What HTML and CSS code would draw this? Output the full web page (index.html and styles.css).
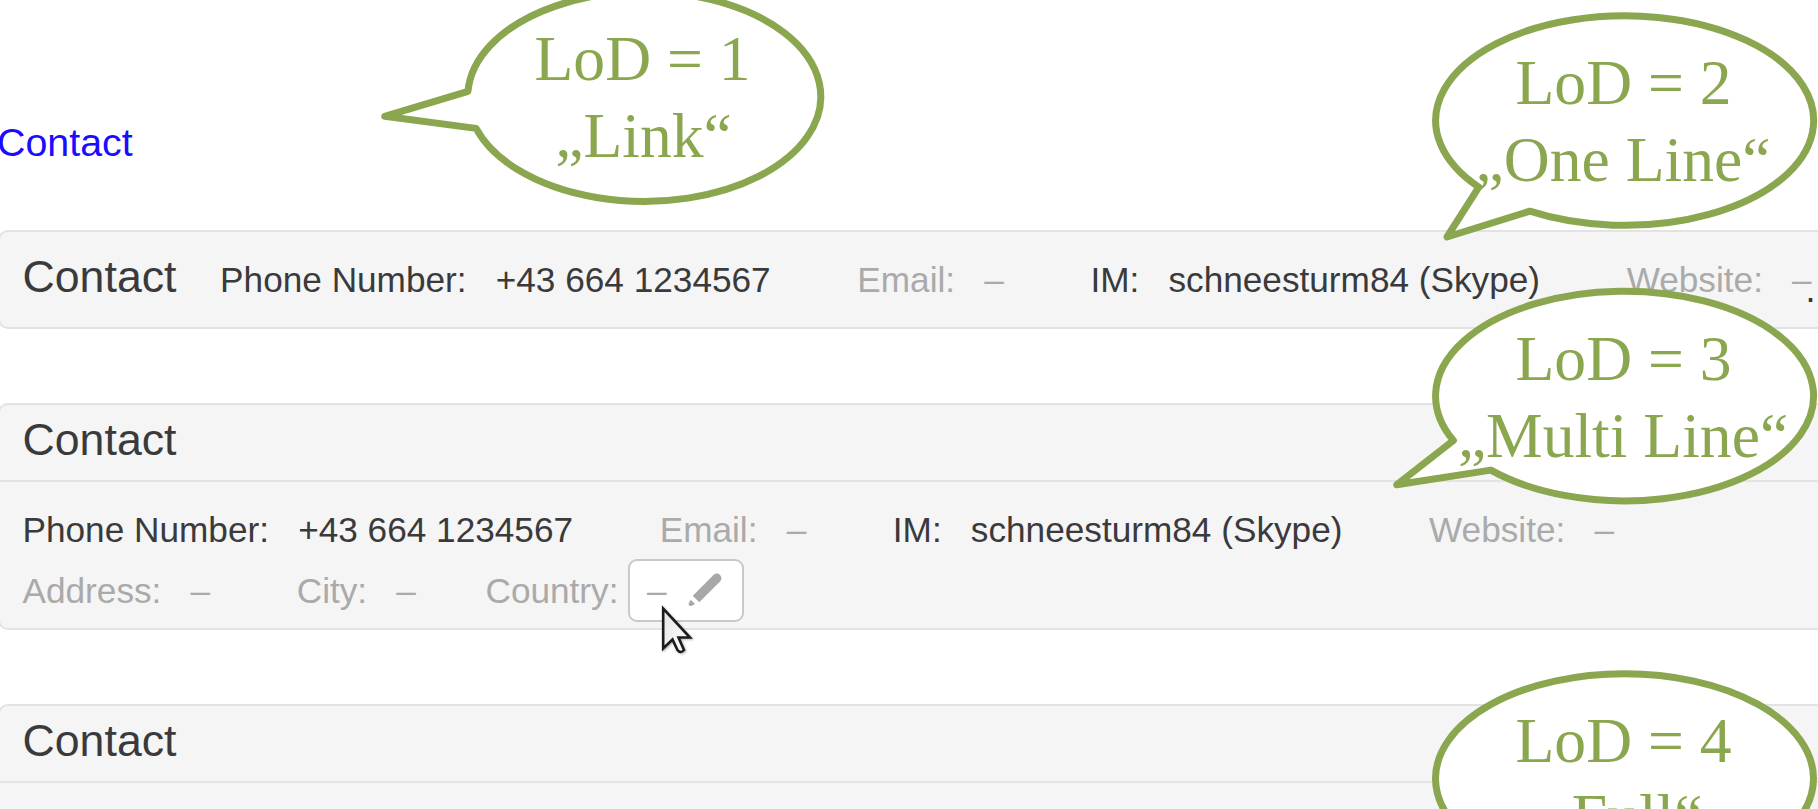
FILE: index.html
```html
<!DOCTYPE html>
<html lang="en">
<head>
<meta charset="utf-8">
<title>Contact</title>
<link rel="stylesheet" href="styles.css">
</head>
<body>
<main class="page">
  <a class="link">Contact</a>

  <section class="panel panel-line">
    <h2 class="title">Contact</h2>
    <div class="fields">
      <div class="field"><span>Phone Number:</span><span>+43 664 1234567</span></div>
      <div class="field empty"><span>Email:</span><span>–</span></div>
      <div class="field"><span>IM:</span><span>schneesturm84 (Skype)</span></div>
      <div class="field empty"><span>Website:</span><span>–</span></div>
    </div>
  </section>

  <section class="panel panel-multi">
    <header class="head"><h2 class="title">Contact</h2></header>
    <div class="body">
      <div class="fields">
        <div class="field"><span>Phone Number:</span><span>+43 664 1234567</span></div>
        <div class="field empty"><span>Email:</span><span>–</span></div>
        <div class="field"><span>IM:</span><span>schneesturm84 (Skype)</span></div>
        <div class="field empty"><span>Website:</span><span>–</span></div>
      </div>
      <div class="fields second">
        <div class="field empty"><span>Address:</span><span>–</span></div>
        <div class="field empty"><span>City:</span><span>–</span></div>
        <div class="field empty editing"><span>Country:</span>
          <span class="edit"><span>–</span>
            <svg class="pencil" viewBox="0 0 36 36"><path class="shaft" d="M9 27L29.500 6.500"/><circle class="tip" cx="29.800" cy="6.200" r="4.600"/><path class="tip" d="M3.800 27.800L8 32L4.500 34Q1 34.500 1.800 31Z"/></svg>
          </span>
        </div>
      </div>
    </div>
  </section>

  <section class="panel panel-full">
    <header class="head"><h2 class="title">Contact</h2></header>
  </section>
</main>

<svg class="overlay" viewBox="0 0 1818 809">
  <defs>
    <linearGradient id="pointer" x1="0" y1="0" x2="1" y2="1">
      <stop offset="0" stop-color="#e4e4e4"/><stop offset="1" stop-color="#fff"/>
    </linearGradient>
  </defs>
  <text class="dot" x="1805.500" y="301.500">.</text>
  <g class="callout">
    <path d="M468 91.300A176.500 104.800 0 1 1 476.100 128.400L384.700 116.300Z"/>
    <text x="642.500" y="79.500">LoD = 1</text><text x="643.500" y="156.500">„Link“</text>
  </g>
  <g class="callout">
    <path d="M1478.800 187.200A189 104.800 0 1 1 1529.800 211.200L1447 237Z"/>
    <text x="1623.500" y="103.500">LoD = 2</text><text x="1623" y="180.500">„One Line“</text>
  </g>
  <g class="callout">
    <path d="M1453.400 440.500A189 104.800 0 1 1 1490.800 470.100L1396.700 484.700Z"/>
    <text x="1623.500" y="379.500">LoD = 3</text><text x="1623" y="456.500">„Multi Line“</text>
  </g>
  <g class="callout">
    <ellipse cx="1624.500" cy="778.500" rx="189" ry="104.800"/>
    <text x="1623.500" y="761.500">LoD = 4</text><text x="1623" y="838">„Full“</text>
  </g>
  <path class="cursor" d="M663.200 608.500V648.500L672.500 639.500L677.500 650Q680.500 654 684 650L678.500 637.500H690Z"/>
</svg>
</body>
</html>
```
FILE: styles.css
```css
* { box-sizing: border-box; }
body {
  margin: 0;
  width: 1818px;
  height: 809px;
  overflow: hidden;
  position: relative;
  background: #fff;
  color: #3a3a3c;
  font: 35.2px/41px "Liberation Sans", Arial, sans-serif;
}
.page {
  display: flex;
  flex-direction: column;
  height: 809px;
  overflow: hidden;
  padding-top: 119px;
}
.link {
  height: 46px;
  margin: 0 0 65px -3px;
  font-size: 39.4px;
  line-height: 46px;
  color: #1c0cff;
}
.panel {
  flex: none;
  margin: 0 -10px 0 -2px;
  border: 2px solid #e3e3e3;
  border-radius: 10px;
  background: #f5f5f5;
}
.title {
  margin: 0;
  font-size: 44.7px;
  line-height: 52px;
  font-weight: 400;
}
.panel-line {
  height: 99px;
  display: flex;
  align-items: baseline;
  gap: 43.6px;
  padding: 19px 0 0 22.5px;
}
.panel-multi { height: 227px; margin-top: 74px; }
.panel-full { height: 200px; margin-top: 74px; }
.head {
  height: 77px;
  padding: 9px 0 0 22.5px;
  border-bottom: 2px solid #e3e3e3;
}
.body { padding: 27px 0 0 22.5px; }
.fields { display: flex; align-items: baseline; gap: 86.6px; white-space: nowrap; }
.field { display: flex; gap: 29.2px; }
.empty { color: #aaa; }
.second { height: 62px; margin-top: 9px; align-items: center; }
.second .field { align-items: center; }
.second .editing { gap: 9.500px; margin-left: -17px; }
.edit {
  display: flex;
  align-items: center;
  width: 116px;
  height: 63px;
  padding-left: 17px;
  gap: 20px;
  border: 2px solid #c9c9c9;
  border-radius: 9px;
  background: #fff;
}
.pencil { width: 36px; height: 36px; }
.shaft { fill: none; stroke: #a8a8a8; stroke-width: 9.2px; }
.tip { fill: #a8a8a8; }
.overlay {
  position: absolute;
  left: 0;
  top: 0;
  width: 1818px;
  height: 809px;
}
.callout path, .callout ellipse {
  fill: #fff;
  stroke: #8aa64f;
  stroke-width: 7px;
  stroke-linejoin: round;
}
.callout text {
  fill: #8aa64f;
  font: 63.6px "Liberation Serif", "Times New Roman", serif;
  text-anchor: middle;
}
.dot { fill: #333; font-size: 36px; }
.cursor { fill: url(#pointer); stroke: #1c1c1c; stroke-width: 2.6px; filter: drop-shadow(1px 1px 1px rgba(0, 0, 0, .3)); }
```
